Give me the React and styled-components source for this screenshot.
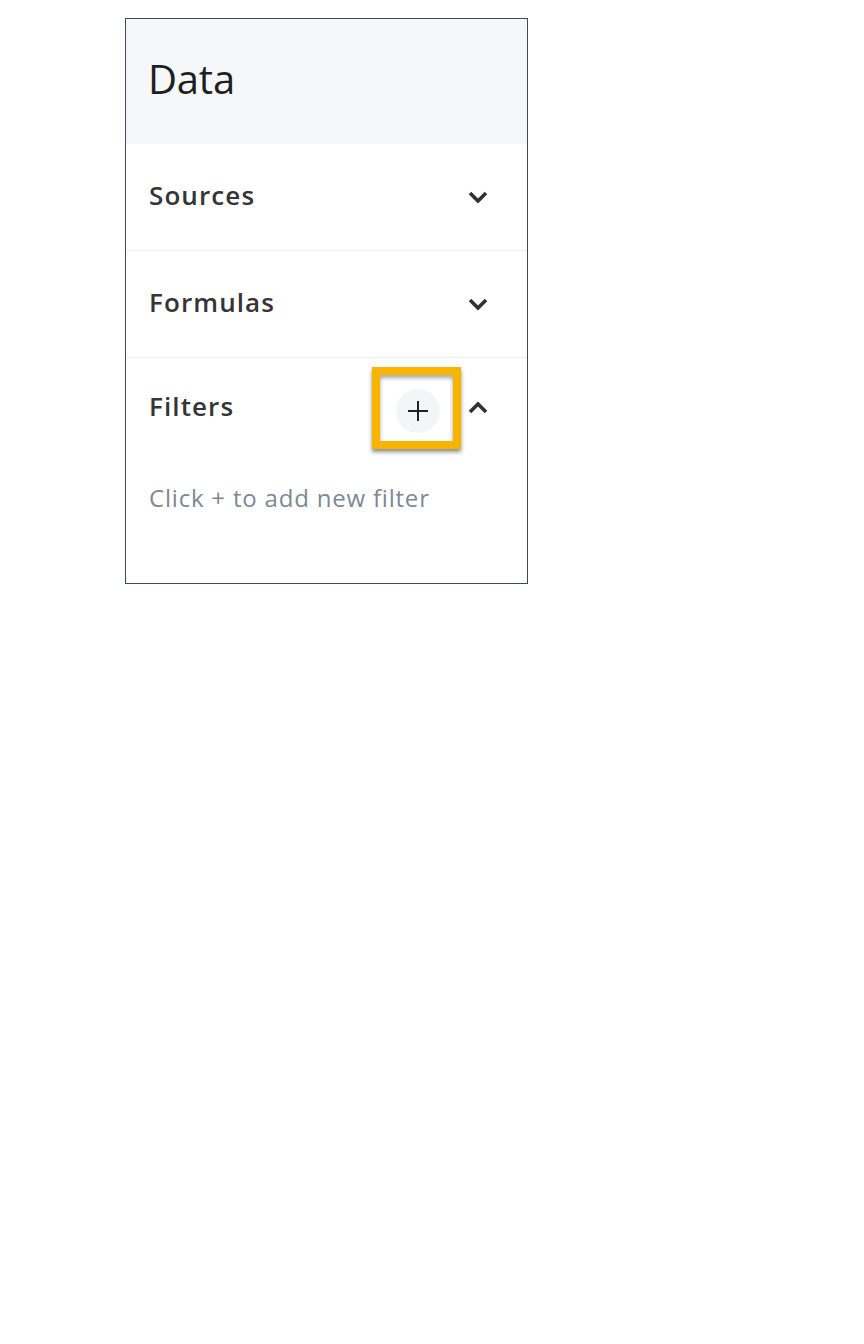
import React from 'react';
import styled, { createGlobalStyle } from 'styled-components';

const GlobalStyle = createGlobalStyle`
    body {
        margin: 0;
        background: #ffffff;
        font-family: 'Open Sans', 'Liberation Sans', sans-serif;
    }
`;

const Page = styled.div`
    padding: 18px 0 0 125px;
`;

const Panel = styled.div`
    width: 401px;
    border: 1px solid #3d4b57;
    background: #ffffff;
    display: flex;
    flex-direction: column;
`;

const Header = styled.div`
    height: 125px;
    background: #f6f7f9;
    display: flex;
    align-items: center;
    padding: 0 22px 6px;
    box-sizing: border-box;
`;

const Title = styled.h1`
    margin: 0;
    font-size: 40px;
    font-weight: 400;
    color: #1d1f22;
    letter-spacing: -0.2px;
`;

const Section = styled.div`
    border-bottom: ${(props) => (props.last ? 'none' : '1px solid #eef0f4')};
    padding-bottom: ${(props) => (props.last ? '70px' : '0')};
`;

const SectionHead = styled.div`
    height: ${(props) => props.height || 106}px;
    display: flex;
    align-items: center;
    padding: 0 39px 0 23px;
    gap: 28px;
`;

const SectionLabel = styled.span`
    flex: 1;
    font-size: 26px;
    font-weight: 600;
    letter-spacing: 1.1px;
    color: #333538;
    padding-bottom: 5px;
`;

const Chevron = styled.svg`
    width: 20px;
    height: 12px;
    display: block;
`;

const AddWrap = styled.div`
    position: relative;
    width: 44px;
    height: 44px;
    margin-top: 6px;
`;

const AddButton = styled.button`
    width: 44px;
    height: 44px;
    border: none;
    border-radius: 50%;
    background: #f4f5f7;
    display: flex;
    align-items: center;
    justify-content: center;
    padding: 0;
    cursor: pointer;
`;

const Highlight = styled.div`
    position: absolute;
    left: -24px;
    top: -22px;
    width: 73px;
    height: 66px;
    border: 8px solid #f7b500;
    box-shadow: 0 3px 4px rgba(0, 0, 0, 0.45), inset 0 3px 4px rgba(0, 0, 0, 0.35);
    pointer-events: none;
`;

const Hint = styled.p`
    margin: 0;
    padding: 25px 23px 0;
    font-size: 24px;
    line-height: 30px;
    letter-spacing: 0.8px;
    color: #7d8894;
`;

const ChevronIcon = ({ up }) => (
    <Chevron viewBox="0 0 20 12">
        <polyline
            points={up ? '2,10 10,2 18,10' : '2,2 10,10 18,2'}
            fill="none"
            stroke="#2f3134"
            strokeWidth="3.6"
        />
    </Chevron>
);

const App = () => {
    return (
        <Page>
            <GlobalStyle />
            <Panel>
                <Header>
                    <Title>Data</Title>
                </Header>

                <Section>
                    <SectionHead>
                        <SectionLabel>Sources</SectionLabel>
                        <ChevronIcon />
                    </SectionHead>
                </Section>

                <Section>
                    <SectionHead>
                        <SectionLabel>Formulas</SectionLabel>
                        <ChevronIcon />
                    </SectionHead>
                </Section>

                <Section last>
                    <SectionHead height={100}>
                        <SectionLabel>Filters</SectionLabel>
                        <AddWrap>
                            <AddButton aria-label="Add filter">
                                <svg width="22" height="22" viewBox="0 0 22 22">
                                    <path d="M11 1v20M1 11h20" stroke="#1f2124" strokeWidth="2" />
                                </svg>
                            </AddButton>
                            <Highlight />
                        </AddWrap>
                        <ChevronIcon up />
                    </SectionHead>
                    <Hint>Click + to add new filter</Hint>
                </Section>
            </Panel>
        </Page>
    );
};

export default App;
